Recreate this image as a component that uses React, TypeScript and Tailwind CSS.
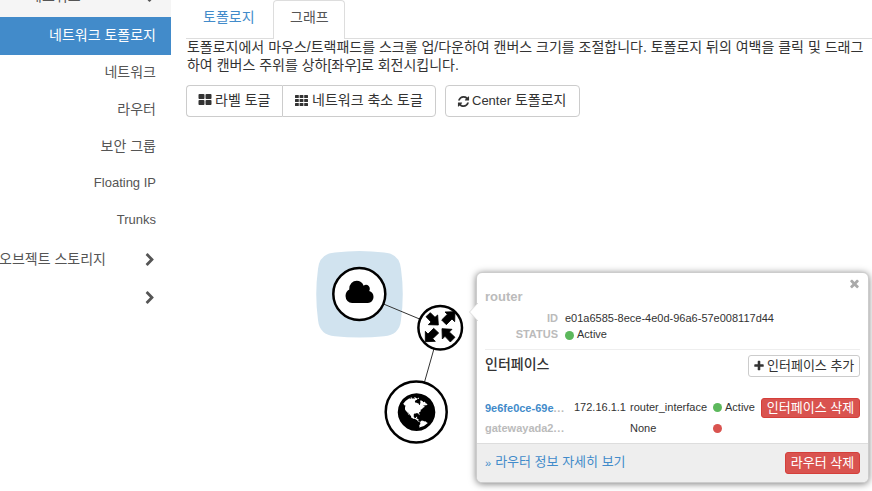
import type { ReactNode } from "react";

const ICONS = {
  thLarge:
    "M832 1024v384q0 52-38 90t-90 38h-512q-52 0-90-38t-38-90v-384q0-52 38-90t90-38h512q52 0 90 38t38 90zm0-768v384q0 52-38 90t-90 38h-512q-52 0-90-38t-38-90v-384q0-52 38-90t90-38h512q52 0 90 38t38 90zm896 768v384q0 52-38 90t-90 38h-512q-52 0-90-38t-38-90v-384q0-52 38-90t90-38h512q52 0 90 38t38 90zm0-768v384q0 52-38 90t-90 38h-512q-52 0-90-38t-38-90v-384q0-52 38-90t90-38h512q52 0 90 38t38 90z",
  refresh:
    "M1639 1056q0 5-1 7-64 268-268 434.5t-478 166.5q-146 0-282.5-55t-243.5-157l-129 129q-19 19-45 19t-45-19-19-45v-448q0-26 19-45t45-19h448q26 0 45 19t19 45-19 45l-137 137q71 66 161 102t187 36q134 0 250-65t186-179q11-17 53-117 8-23 30-23h192q13 0 22.5 9.5t9.5 22.5zm25-800v448q0 26-19 45t-45 19h-448q-26 0-45-19t-19-45 19-45l138-138q-148-137-349-137-134 0-250 65t-186 179q-11 17-53 117-8 23-30 23h-199q-13 0-22.5-9.5t-9.5-22.5v-7q65-268 270-434.5t480-166.5q146 0 284 55.5t245 156.5l130-129q19-19 45-19t45 19 19 45z",
  chevron:
    "M1363 877l-742 742q-19 19-45 19t-45-19l-166-166q-19-19-19-45t19-45l531-531-531-531q-19-19-19-45t19-45l166-166q19-19 45-19t45 19l742 742q19 19 19 45t-19 45z",
  plus:
    "M1600 736v192q0 40-28 68t-68 28h-416v416q0 40-28 68t-68 28h-192q-40 0-68-28t-28-68v-416h-416q-40 0-68-28t-28-68v-192q0-40 28-68t68-28h416v-416q0-40 28-68t68-28h192q40 0 68 28t28 68v416h416q40 0 68 28t28 68z",
  times:
    "M1490 1322q0 40-28 68l-136 136q-28 28-68 28t-68-28l-294-294-294 294q-28 28-68 28t-68-28l-136-136q-28-28-28-68t28-68l294-294-294-294q-28-28-28-68t28-68l136-136q28-28 68-28t68 28l294 294 294-294q28-28 68-28t68 28l136 136q28 28 28 68t-28 68l-294 294 294 294q28 28 28 68z",
  cloud:
    "M1984 1152q0 159-112.5 271.5t-271.5 112.5h-1088q-185 0-316.5-131.5t-131.5-316.5q0-132 71-241.5t187-163.5q-2-28-2-43 0-212 150-362t362-150q158 0 286.5 88t187.5 230q70-62 166-62 106 0 181 75t75 181q0 75-41 138 129 30 213 134.5t84 239.5z",
  globe:
    "M896 128q209 0 385.5 103t279.5 279.5 103 385.5-103 385.5-279.5 279.5-385.5 103-385.5-103-279.5-279.5-103-385.5 103-385.5 279.5-279.5 385.5-103zm274 521q-2 1-9.5 9.5t-13.5 9.5q2 0 4.5-5t5-11 3.5-7q6-7 22-15 14-6 52-12 34-8 51 11-2-2 9.5-13t14.5-12q3-2 15-4.5t15-7.5l2-22q-12 1-17.5-7t-6.5-21q0 2-6 8 0-7-4.5-8t-11.5 1-9 1q-10-3-15-7.5t-8-16.5-4-15q-2-5-9.5-11t-9.5-10q-1-2-2.5-5.5t-3-6.5-4-5.5-5.5-2.5-7 5-7.5 10-4.5 5q-3-2-6-1.5t-4.5 1-4.5 3-5 3.5q-3 2-8.5 3t-8.5 2q15-5-1-11-10-4-16-3 9-4 7.500-12t-8.500-14h5q-1-4-8.500-8.500t-17.500-8.500-13-6q-8-5-34-9.500t-33-.5q-5 6-4.500 10.500t4 14 3.500 12.500q1 6-5.500 13t-6.500 12q0 7 14 15.500t10 21.500q-3 8-16 16t-16 12q-5 8-1.500 18.500t10.500 16.500q2 2 1.500 4t-3.500 4.500-5.500 4-6.500 3.500l-3 2q-11 5-20.500-6t-13.500-26q-7-25-16-30-23-8-29 1-5-13-41-26-25-9-58-4 6-1 0-15-7-15-19-12 3-6 4-17.500t1-13.500q3-13 12-23 1-1 7-8.500t9.500-13.500.5-6q35 4 50-11 5-5 11.500-17t10.500-17q9-6 14-5.500t14.500 5.500 14.500 5q14 1 15.500-11t-7.500-20q12 1 3-17-4-7-8-9-12-4-27 5-8 4 2 8-1-1-9.500 10.500t-16.500 17.500-16-5q-1-1-5.500-13.500t-9.500-13.500q-8 0-16 15 3-8-11-15t-24-8q19-12-8-27-7-4-20.500-5t-19.500 4q-5 7-5.500 11.500t5 8 10.500 5.500 11.500 4 8.500 3q14 10 8 14-2 1-8.500 3.500t-11.500 4.500-6 4q-3 4 0 14t-2 14q-5-5-9-17.500t-7-16.500q7 9-25 6l-10-1q-4 0-16 2t-20.500 1-13.500-8q-4-8 0-20 1-4 4-2-4-3-11-9.500t-10-8.500q-46 15-94 41 6 1 12-1 5-2 13-6.500t10-5.500q34-14 42-7l5-5q14 16 20 25-7-4-30-1-20 6-22 12 7 12 5 18-4-3-11.500-10t-14.500-11-15-5q-16 0-22 1-146 80-235 222 7 7 12 8 4 1 5 9t2.500 11 11.500-3q9 8 3 19 1-1 44 27 19 17 21 21 3 11-10 18-1-2-9-9t-9-4q-3 5 .5 18.500t10.500 12.500q-7 0-9.500 16t-2.500 35.500-1 23.500l2 1q-3 12 5.500 34.500t21.500 19.500q-13 3 20 43 6 8 8 9 3 2 12 7.500t15 10 10 10.500q4 5 10 22.500t14 23.500q-2 6 9.500 20t10.500 23q-1 0-2.500 1t-2.500 1q3 7 15.500 14t15.500 13q1 3 2 10t3 11 8 2q2-20-24-62-15-25-17-29-3-5-5.500-15.500t-4.500-14.500q2 0 6 1.500t8.500 3.500 7.500 4 2 3q-3 7 2 17.500t12 18.500 17 19 12 13q6 6 14 19.500t0 13.500q9 0 20 10t17 20q5 8 8 26t5 24q2 7 8.500 13.500t12.500 9.500l16 8 13 7q5 2 18.500 10.500t21.500 11.500q10 4 16 4t14.500-2.500 13.500-3.500q15-2 29 15t21 21q36 19 55 11-2 1 .5 7.500t8 15.500 9 14.500 5.500 8.500q5 6 18 15t18 15q6-4 7-9-3 8 7 20t18 10q14-3 14-32-31 15-49-18 0-1-2.500-5.500t-4-8.500-2.500-8.500 0-7.500 5-3q9 0 10-3.500t-2-12.500-4-13q-1-8-11-20t-12-15q-5 9-16 8t-16-9q0 1-1.500 5.500t-1.500 6.500q-13 0-15-1 1-3 2.500-17.500t3.500-22.500q1-4 5.500-12t7.500-14.500 4-12.500-4.500-9.500-17.500-2.500q-19 1-26 20-1 3-3 10.500t-5 11.500-9 7q-7 3-24 2t-24-5q-13-8-22.500-29t-9.500-37q0-10 2.500-26.500t3-25-5.500-24.500q3-2 9-9.500t10-10.500q2-1 4.500-1.500t4.500 0 4-1.500 3-6q-1-1-4-3-3-3-4-3 7 3 28.500-1.500t27.500 1.500q15 11 22-2 0-1-2.500-9.500t-.5-13.500q5 27 29 9 3 3 15.500 5t17.500 5q3 2 7 5.500t5.500 4.500 5-.5 8.500-6.500q10 14 12 24 11 40 19 44 7 3 11 2t4.500-9.500 0-14-1.500-12.500l-1-8v-18l-1-8q-15-3-18.500-12t1.500-18.500 15-18.500q1-1 8-3.500t15.500-6.500 12.500-8q21-19 15-35 7 0 11-9-1 0-5-3t-7.500-5-4.500-2q9-5 2-16 5-3 7.500-11t7.500-10q9 12 21 2 8-8 1-16 5-7 20.500-10.500t18.500-9.500q7 2 8-2t1-12 3-12q4-5 15-9t13-5l17-11q3-4 0-4 18 2 31-11 10-11-6-20 3-6-3-9.500t-15-5.500q3-1 11.500-.5t10.500-1.500q15-10-7-16-17-5-43 12zm-163 877q206-36 351-189-3-3-12.500-4.500t-12.500-3.500q-18-7-24-8 1-7-2.500-13t-8-9-12.500-8-11-7q-2-2-7-6t-7-5.500-7.500-4.500-8.500-2-10 1l-3 1q-3 1-5.500 2.500t-5.500 3-4 3 0 2.500q-21-17-36-22-5-1-11-5.500t-10.500-7-10-1.500-11.500 7q-5 5-6 15t-2 13q-7-5 0-17.500t2-18.500q-3-6-10.500-4.500t-12 4.500-11.500 8.500-9 6.500-8.500 5.500-8.500 7.500q-3 4-6 12t-5 11q-2-4-11.500-6.500t-9.500-5.500q2 10 4 35t5 38q7 31-12 48-27 25-29 40-4 22 12 26 0 7-8 20.500t-7 21.500q0 6 2 16z",
};

function Icon({ path, className }: { path: string; className: string }) {
  return (
    <svg viewBox="0 0 1792 1792" fill="currentColor" className={`shrink-0 ${className}`}>
      <path d={path} />
    </svg>
  );
}

function GridIcon() {
  return (
    <svg viewBox="0 0 13 11" fill="currentColor" className="mb-[2px] h-[11px] w-[13px] shrink-0">
      {[0, 4, 8].map((y) =>
        [0, 4.6, 9.2].map((x) => <rect key={`${x}-${y}`} x={x} y={y} width="3.8" height="3" rx="0.5" />),
      )}
    </svg>
  );
}

function SideItem({ children }: { children: ReactNode }) {
  return <li className="flex h-[37px] items-center justify-end pr-[15px] pb-[3px]">{children}</li>;
}

function Dot({ className }: { className: string }) {
  return <span className={`block size-[9px] shrink-0 rounded-full ${className}`} />;
}

function Sidebar() {
  return (
    <nav className="w-[171px] shrink-0 text-[14px] leading-5 text-[#555]">
      <div className="flex h-[17px] items-start justify-between overflow-hidden bg-[#f5f5f5] pr-[15px] pl-[29px]">
        <span className="-mt-[14px]">네트워크</span>
        <Icon path={ICONS.chevron} className="-mt-[9px] size-[14px] rotate-90" />
      </div>
      <ul>
        <li className="flex h-[38px] items-center justify-end bg-[#428bca] pr-[15px] pb-[2px] text-white">
          네트워크 토폴로지
        </li>
        <SideItem>네트워크</SideItem>
        <SideItem>라우터</SideItem>
        <SideItem>보안 그룹</SideItem>
        <SideItem>
          <span className="text-[13px]">Floating IP</span>
        </SideItem>
        <SideItem>
          <span className="text-[13px]">Trunks</span>
        </SideItem>
      </ul>
      <div className="flex h-[39px] items-center justify-between pr-[14px]">
        <span className="-ml-px pb-[2px]">오브젝트 스토리지</span>
        <Icon path={ICONS.chevron} className="size-[14px]" />
      </div>
      <div className="flex h-[38px] items-center justify-end pr-[14px]">
        <Icon path={ICONS.chevron} className="size-[14px]" />
      </div>
    </nav>
  );
}

function Topology() {
  return (
    <svg viewBox="300 240 180 210" className="absolute top-[240px] left-[300px] h-[210px] w-[180px]">
      <path
        d="M335 252.500Q359.500 249.500 384 252.500Q399.500 253.500 401 269Q404.500 294 401 320Q399.500 335 384 336.300Q359.500 338.800 335 336.300Q319.500 335 318 320Q314.500 294 318 269Q319.500 253.500 335 252.500Z"
        fill="#d1e3ef"
      />
      <g stroke="#333" strokeWidth="1">
        <line x1="359.500" y1="294" x2="440" y2="327.500" />
        <line x1="416" y1="412" x2="440" y2="327.500" />
      </g>
      <g fill="#fff" stroke="#000">
        <circle cx="359.300" cy="294" r="26" strokeWidth="2.500" />
        <circle cx="440.200" cy="327.700" r="21.800" strokeWidth="2.500" />
        <circle cx="416.200" cy="412" r="30.500" strokeWidth="2.500" />
      </g>
      <path d={ICONS.cloud} transform="translate(344.600 278.700) scale(.01458 .0158)" />
      <path d={ICONS.globe} transform="translate(394.600 390.200) scale(.02448)" />
      <g transform="translate(410 295) scale(.33333)" stroke="#000" strokeWidth="2.500">
        <path d="M48 65L61 53L75 67L83 60L85 90L55 89L63 81Z" />
        <path d="M105 51L135 50L134 80L126 72L109 89L95 75L112 58Z" />
        <path d="M46 109L54 117L71 100L86 114L68 131L76 139L46 140Z" />
        <path d="M96 101L126 103L118 111L135 127L121 141L105 124L97 132Z" />
      </g>
    </svg>
  );
}

function Popup() {
  return (
    <section className="absolute top-[272px] left-[476px] flex h-[211px] w-[393px] flex-col rounded-[6px] border border-[#ccc] bg-white text-[11px] text-[#333] shadow-[0_1px_7px_rgba(0,0,0,0.5)]">
      <svg viewBox="0 0 9 18" className="absolute top-[30px] -left-[8px] h-[18px] w-[9px]">
        <path d="M9 0L0.500 9L9 18" fill="#fff" stroke="#ddd" strokeWidth="1" />
      </svg>
      <div className="flex h-[15px] justify-end pt-[4px] pr-[7px] text-[#aaa]">
        <Icon path={ICONS.times} className="size-[13px]" />
      </div>
      <div className="mx-[8px] flex h-[62px] flex-col border-b border-[#eee]">
        <h3 className="text-[13px] leading-[18px] font-bold text-[#bbb]">router</h3>
        <dl className="mt-[4px] grid grid-cols-[73px_1fr] gap-x-[7px] leading-[16px]">
          <dt className="text-right font-bold text-[#bbb]">ID</dt>
          <dd>e01a6585-8ece-4e0d-96a6-57e008117d44</dd>
          <dt className="text-right font-bold text-[#bbb]">STATUS</dt>
          <dd className="flex items-center gap-[3px]">
            <Dot className="mt-[2px] bg-[#5cb85c]" />
            Active
          </dd>
        </dl>
      </div>
      <div className="mx-[8px] mt-[5px] flex h-[22px] items-start justify-between">
        <h4 className="-mt-px text-[14px] leading-[20px] font-medium">인터페이스</h4>
        <button className="flex h-[22px] w-[112px] items-center gap-[2px] rounded-[3px] border border-[#ccc] pb-px pl-[4px] text-[13px] leading-[18px] whitespace-nowrap">
          <Icon path={ICONS.plus} className="size-[12px]" />
          인터페이스 추가
        </button>
      </div>
      <div className="mx-[8px] mt-[20px] grid h-[46px] grid-cols-[89px_56px_83px_12px_36px_99px] grid-rows-[21px_20px] items-center leading-[16px]">
        <span className="font-bold text-[#bbb]">
          <span className="text-[#428bca]">9e6fe0ce-69e</span>
          <span className="tracking-[0.7px]">...</span>
        </span>
        <span className="mb-px">172.16.1.1</span>
        <span className="mb-px">router_interface</span>
        <Dot className="bg-[#5cb85c]" />
        <span className="mb-px">Active</span>
        <button className="h-[20px] rounded-[3px] border border-[#d43f3a] bg-[#d9534f] text-center text-[13px] leading-[17px] whitespace-nowrap text-white">
          인터페이스 삭제
        </button>
        <span className="font-bold text-[#bbb]">
          gatewayada2<span className="tracking-[0.7px]">...</span>
        </span>
        <span />
        <span className="mb-px">None</span>
        <Dot className="bg-[#d9534f]" />
      </div>
      <footer className="flex flex-1 items-center justify-between rounded-b-[5px] border-t border-[#ddd] bg-[#eee] px-[8px] text-[13px] leading-[18px] text-[#428bca]">
        <a className="flex items-center gap-[4px] pb-[2px]">
          <span className="pt-[2px] text-[11px]">»</span>
          <span>라우터 정보 자세히 보기</span>
        </a>
        <button className="h-[22px] w-[75px] rounded-[3px] border border-[#d43f3a] bg-[#d9534f] text-center leading-[18px] whitespace-nowrap text-white">
          라우터 삭제
        </button>
      </footer>
    </section>
  );
}

export default function App() {
  return (
    <div className="relative flex h-[491px] w-[872px] overflow-hidden bg-white font-['Liberation_Sans','Noto_Sans_CJK_KR',sans-serif] text-[#333]">
      <Sidebar />
      <main className="ml-[15px] flex min-w-0 flex-1 flex-col text-[14px]">
        <div className="flex h-[39px] shrink-0 border-b border-[#ddd] leading-5">
          <a className="h-[38px] w-[87px] pt-[7px] pl-[17px] text-[#428bca]">토폴로지</a>
          <a className="h-[39px] w-[72px] rounded-t-[4px] border border-b-0 border-[#ddd] bg-white pt-[6px] pl-[16px] text-[#555]">
            그래프
          </a>
        </div>
        <p className="-mt-px h-[47px] pl-px leading-[18px] tracking-[-0.005px] whitespace-nowrap">
          토폴로지에서 마우스/트랙패드를 스크롤 업/다운하여 캔버스 크기를 조절합니다. 토폴로지 뒤의 여백을 클릭 및 드래그
          <br />
          하여 캔버스 주위를 상하[좌우]로 회전시킵니다.
        </p>
        <div className="flex h-[32px] gap-[9px] leading-[20px] whitespace-nowrap">
          <div className="flex">
            <button className="flex w-[96px] items-center gap-[3px] rounded-l-[4px] border border-r-0 border-[#ccc] pb-[2px] pl-[11px]">
              <Icon path={ICONS.thLarge} className="size-[14px]" />
              라벨 토글
            </button>
            <button className="flex w-[154px] items-center gap-[4px] rounded-r-[4px] border border-[#ccc] pl-[12px]">
              <GridIcon />
              <span className="pb-[2px]">네트워크 축소 토글</span>
            </button>
          </div>
          <button className="flex w-[135px] items-center gap-[2px] rounded-[4px] border border-[#ccc] pl-[11px]">
            <Icon path={ICONS.refresh} className="size-[13px]" />
            <span className="pb-[2px]">
              <span className="text-[13px]">Center</span> 토폴로지
            </span>
          </button>
        </div>
      </main>
      <Topology />
      <Popup />
    </div>
  );
}
